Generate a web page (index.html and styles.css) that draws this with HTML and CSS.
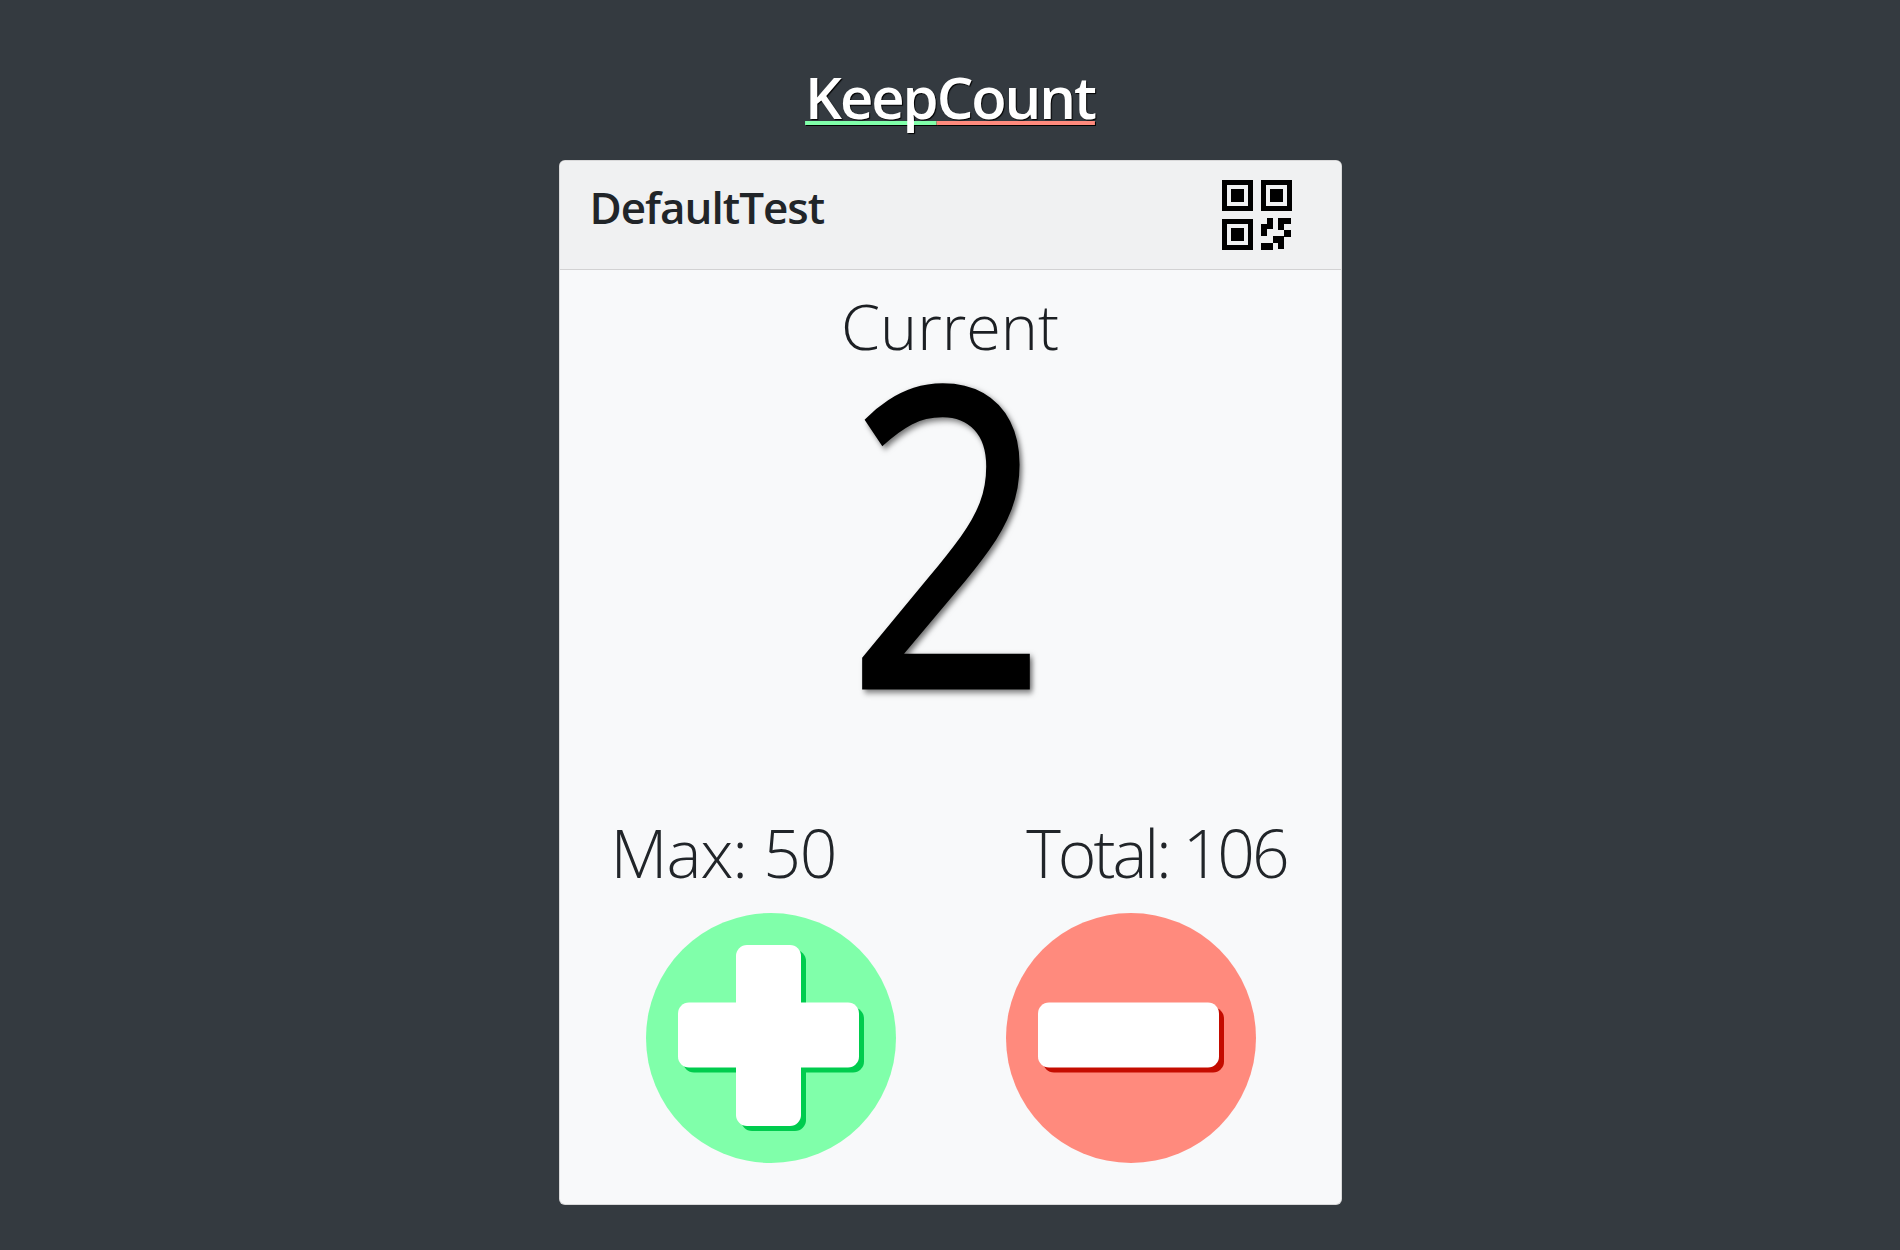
FILE: index.html
```html
<!DOCTYPE html>
<html lang="en">
<head>
<meta charset="utf-8">
<title>KeepCount</title>
<link rel="stylesheet" href="styles.css">
</head>
<body>
<main class="page">
  <h1 class="brand"><span class="brand-keep">Keep</span><span class="brand-count">Count</span></h1>
  <section class="card">
    <header class="card-header">
      <h2 class="card-title">DefaultTest</h2>
      <svg class="qr" viewBox="0 0 70 70" aria-label="QR code">
        <path fill-rule="evenodd" d="M0 0h31v31H0zM5 5v21h21V5zM39 0h31v31H39zM44 5v21h21V5zM0 39h31v31H0zM5 44v21h21V44z"/>
        <path d="M9 9h13v13H9zM48 9h13v13H48zM9 48h13v13H9z"/>
        <path d="M45 38h6v11h-6v7h-6V44h6zM56 38h13v6h-7v6h-6zM62 50h7v7h-7zM51 56h11v13h-6v-6h-5zM39 63h12v7H39z"/>
      </svg>
    </header>
    <div class="card-body">
      <div class="current-label">Current</div>
      <div class="current-value"><span class="digit">2</span></div>
      <div class="stats">
        <span class="stat-max">Max: 50</span>
        <span class="stat-total">Total: 106</span>
      </div>
      <div class="actions">
        <button class="round plus" type="button" aria-label="Increase">
          <svg class="sign" viewBox="0 0 190 190">
            <rect x="0" y="57.5" width="181" height="65" rx="11"/>
            <rect x="58" y="0" width="65" height="181" rx="11"/>
          </svg>
        </button>
        <button class="round minus" type="button" aria-label="Decrease">
          <svg class="sign" viewBox="0 0 190 190">
            <rect x="0" y="57.5" width="181" height="65" rx="11"/>
          </svg>
        </button>
      </div>
    </div>
  </section>
</main>
</body>
</html>
```

FILE: styles.css
```css
* { box-sizing: border-box; }
html, body { margin: 0; height: 100%; }
body {
  background: #343a40;
  font-family: "Open Sans", "Noto Sans", sans-serif;
  color: #212529;
}
.page {
  display: flex;
  flex-direction: column;
  align-items: center;
  padding-top: 61px;
}
.brand {
  margin: 0 0 27px;
  height: 72px;
  font-size: 58px;
  line-height: 72px;
  font-weight: 600;
  letter-spacing: -2.1px;
  color: #fff;
  text-shadow: 1px 1px 1px #000;
}
.brand-keep, .brand-count {
  text-decoration-line: underline;
  text-decoration-thickness: 4px;
  text-underline-offset: 2px;
  text-decoration-skip-ink: none;
}
.brand-keep { text-decoration-color: #80ffaa; }
.brand-count { text-decoration-color: #ff8a7d; }
.card {
  width: 783px;
  height: 1045px;
  background: #f8f9fa;
  border: 1px solid rgba(0,0,0,.125);
  border-radius: 6px;
  overflow: hidden;
}
.card-header {
  height: 109px;
  display: flex;
  justify-content: space-between;
  padding: 19px 49px 0 30px;
  background: #f0f1f2;
  border-bottom: 1px solid rgba(0,0,0,.125);
}
.card-title {
  margin: 0;
  font-size: 44px;
  line-height: 54px;
  font-weight: 600;
  letter-spacing: -1px;
  color: #212529;
}
.qr { width: 70px; height: 70px; fill: #000; display: block; }
.card-body {
  display: flex;
  flex-direction: column;
  align-items: center;
}
.current-label {
  margin-top: 13px;
  font-size: 63px;
  line-height: 86px;
  font-weight: 300;
  color: #1c1f23;
}
.current-value {
  height: 441px;
  font-size: 416px;
  line-height: 314px;
  font-weight: 400;
  color: #000;
}
.digit {
  display: inline-block;
  transform: translateX(-3px) scaleX(.84);
  -webkit-text-stroke: 5px #000;
  filter: drop-shadow(3px 3px 3px rgba(0,0,0,.55));
}
.stats {
  align-self: stretch;
  display: flex;
  justify-content: space-between;
  padding: 0 54px 0 51px;
  font-size: 66px;
  line-height: 84px;
  font-weight: 300;
}
.stat-max { letter-spacing: -1px; }
.stat-total { letter-spacing: -3.1px; }
.actions {
  display: flex;
  gap: 110px;
  margin-top: 19px;
  padding-left: 1px;
}
.round {
  width: 250px;
  height: 250px;
  border: 0;
  padding: 0;
  border-radius: 50%;
  display: flex;
  align-items: center;
  justify-content: center;
}
.plus { background: #80ffaa; }
.minus { background: #ff8a7d; }
.sign {
  width: 190px;
  height: 190px;
  fill: #fff;
  transform: translate(2px, 2px);
}
.plus .sign { filter: drop-shadow(5px 5px 0 #00cc4e); }
.minus .sign { filter: drop-shadow(5px 5px 0 #c40c00); }
```
